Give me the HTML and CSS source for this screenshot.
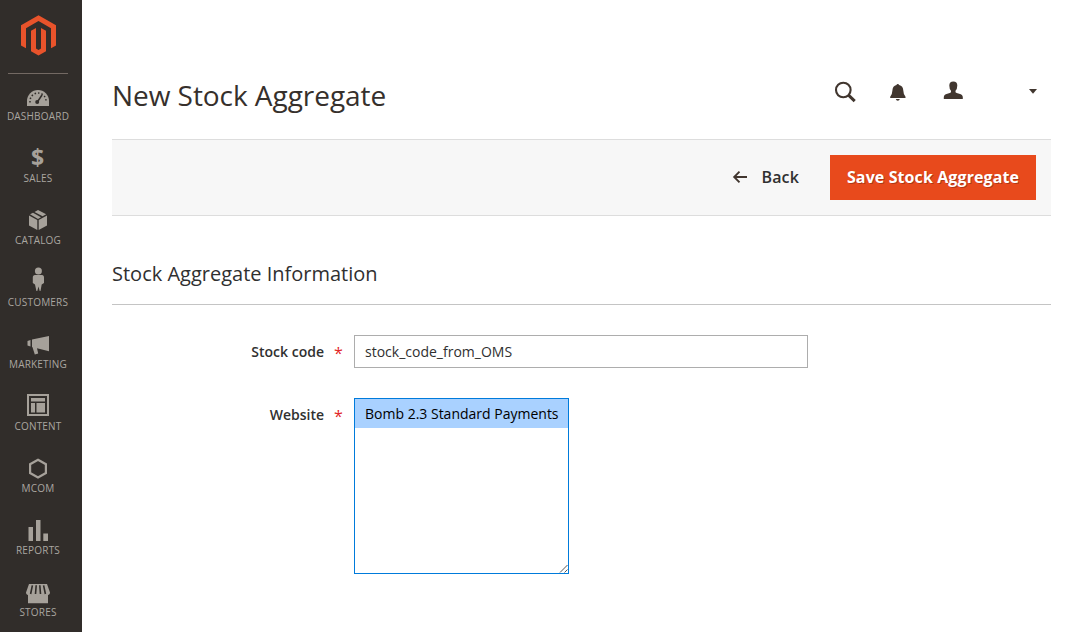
FILE: index.html
```html
<!DOCTYPE html>
<html lang="en">
<head>
<meta charset="utf-8">
<title>New Stock Aggregate</title>
<link rel="stylesheet" href="styles.css">
</head>
<body>
<div class="page">
  <aside class="sidebar">
    <div class="brand">
      <svg class="brand-logo" viewBox="0 0 76 60"><g fill="#e8532b"><path d="M38.5 15.300 56 25.300V45.500L51 48.300V28.300L38.500 21 26 28.300V48.300L21 45.500V25.300Z"/><path d="M31 30.800 36 28V48.400L38.500 50 41 48.400V28L46 30.800V51.200L38.500 55.500 31 51.200Z"/></g></svg>
    </div>
    <nav class="menu">
      <a class="item"><svg class="icon" viewBox="0 0 76 36"><path d="M27 32v-5a11 11 0 0 1 22 0v5z"/><g fill="none" stroke="#312d2a"><path stroke-width="1.500" stroke-dasharray="1.500 2" d="M30 28.500v-1.500a8 8 0 0 1 16 0v1.500"/><path stroke-width="1.500" d="M37 28.500 42 21"/></g><circle cx="37.200" cy="28" r="2" fill="#312d2a"/></svg><span class="label">DASHBOARD</span></a>
      <a class="item"><svg class="icon" viewBox="0 0 76 36"><text class="currency" x="37.500" y="30" text-anchor="middle">$</text></svg><span class="label">SALES</span></a>
      <a class="item"><svg class="icon" viewBox="0 0 76 36"><path d="M29 17.500 37.300 22V32L29 27.500ZM38.700 22 47 17.500V27.500L38.700 32ZM30 16.300 33 14.700 41 19.200 38 20.900ZM34.500 13.900 38 12 46.200 16.300 42.600 18.300Z"/></svg><span class="label">CATALOG</span></a>
      <a class="item"><svg class="icon" viewBox="0 0 76 36"><circle cx="38.400" cy="10.900" r="3.500"/><path d="M35 15h7c1.300 0 2 1 2 2.500v5.500l-2.300 1.500L40.500 31h-.8L38.500 26.500 37.300 31h-.9L35 24.500 32.800 23v-5.500C32.800 16 33.500 15 35 15Z"/></svg><span class="label">CUSTOMERS</span></a>
      <a class="item"><svg class="icon" viewBox="0 0 76 36"><path d="M27.500 19 30.500 18V24.500L27.500 23.500ZM32 17.500 49 14V29.200L37 26.200 38.200 31.500 34.800 32.500 32.500 25.300 32 25Z"/></svg><span class="label">MARKETING</span></a>
      <a class="item"><svg class="icon" viewBox="0 0 76 36"><path fill-rule="evenodd" d="M27 10H49V32H27ZM29 12V30H47V12ZM31 14H45V17.500H31ZM31 19H35V28.500H31ZM36.500 19H45V28.500H36.500Z"/></svg><span class="label">CONTENT</span></a>
      <a class="item"><svg class="icon" viewBox="0 0 76 36"><path class="outline" d="M38 13.800 45.900 18.200V27L38 31.400 30.100 27V18.200Z"/></svg><span class="label">MCOM</span></a>
      <a class="item"><svg class="icon" viewBox="0 0 76 36"><path d="M28.500 19H33V33H28.500ZM36 12H40.500V33H36ZM43.300 25.500H48V33H43.300Z"/></svg><span class="label">REPORTS</span></a>
      <a class="item"><svg class="icon" viewBox="0 0 76 36"><path d="M29 14H47L50 22.500C50 24 49 25 48 25V33.300H28V25C27 25 26 24 26 22.500Z"/><path fill="none" stroke="#312d2a" stroke-width="1.600" d="M32.400 15.300 30.600 24M36.200 15.300 35.500 24M39.800 15.300 40.500 24M43.600 15.300 45.400 24"/></svg><span class="label">STORES</span></a>
    </nav>
  </aside>
  <main class="content">
    <header class="header">
      <h1 class="title">New Stock Aggregate</h1>
      <svg class="tools" viewBox="0 0 221 30"><g fill="#41362f"><circle cx="13.300" cy="14" r="7.300" fill="none" stroke="#41362f" stroke-width="2.100"/><path d="M18.500 19.200 24.700 25.200" stroke="#41362f" stroke-width="3"/><path d="M67.800 8q1 0 1.300 1.100 4 .9 4.200 5.400.2 4.500 2.200 6.300v1.200H60.200v-1.200q2-1.800 2.200-6.300.2-4.500 4.100-5.400.1-1.100 1.300-1.100ZM65.800 23h4q-.4 1.800-2 1.800t-2-1.800Z"/><path d="M123.300 5.400q4 0 4 4.100 0 3.400-1.800 5.300v1.500q.5.600 3.700 1.400 3.600.9 3.600 3.500V23h-19v-1.800q0-2.600 3.500-3.500 3.200-.8 3.700-1.400v-1.500q-1.700-1.900-1.700-5.300 0-4.100 4-4.100Z"/><path d="M199 13h8l-4 4.700Z"/></g></svg>
    </header>
    <div class="actions">
      <button class="back"><svg class="arrow" viewBox="0 0 16 14"><path d="M15 7H2M7.500 1.700 2.200 7 7.500 12.300" fill="none" stroke="#41362f" stroke-width="1.900"/></svg>Back</button>
      <button class="save">Save Stock Aggregate</button>
    </div>
    <h2 class="section">Stock Aggregate Information</h2>
    <form class="form">
      <label class="name" for="code">Stock code<span class="required">*</span></label>
      <input class="input" id="code" value="stock_code_from_OMS">
      <label class="name" for="site">Website<span class="required">*</span></label>
      <div class="listbox" id="site"><div class="option">Bomb 2.3 Standard Payments</div><svg class="grip" viewBox="0 0 9 9"><path d="M1 8.500 8.500 1M5.500 8.500 8.500 5.500" fill="none" stroke="#555" stroke-width="1"/></svg></div>
    </form>
  </main>
</div>
</body>
</html>
```
FILE: styles.css
```css
* { box-sizing: border-box; }
body { margin: 0; font-family: "Open Sans", sans-serif; color: #303030; background: #fff; }
.page { display: flex; width: 1072px; height: 632px; overflow: hidden; }
.sidebar { width: 82px; flex: none; background: #312d2a; padding-right: 6px; }
.brand { height: 74px; margin: 0 8px; border-bottom: 1px solid #736963; }
.brand-logo { display: block; width: 76px; height: 60px; margin-left: -8px; }
.menu { display: flex; flex-direction: column; }
.item { height: 62px; display: flex; flex-direction: column; color: #aaa6a0; fill: #a6a19a; }
.icon { width: 76px; height: 36px; flex: none; }
.currency { font: 700 23px "Open Sans", sans-serif; }
.outline { fill: none; stroke: #a6a19a; stroke-width: 2.2; }
.label { font-size: 10px; line-height: 12px; letter-spacing: .2px; text-align: center; }
.content { flex: 1; padding: 0 21px 0 30px; }
.header { height: 139px; padding-top: 76px; display: flex; justify-content: space-between; }
.title { margin: 0; font-size: 28px; line-height: 38px; letter-spacing: -.05px; font-weight: 400; color: #36302c; white-space: nowrap; }
.tools { width: 221px; height: 30px; }
.actions { height: 77px; display: flex; justify-content: flex-end; align-items: center; gap: 31px; padding-right: 15px; background: #f7f7f7; border: solid #ddd; border-width: 1px 0; }
.back, .save { font: 600 16px/22px "Open Sans", sans-serif; border: 0; padding: 0 0 2px; }
.back { display: flex; align-items: center; gap: 13px; letter-spacing: .15px; background: none; color: #303030; }
.arrow { width: 16px; height: 14px; }
.save { width: 206px; height: 45px; font-weight: 700; letter-spacing: .1px; white-space: nowrap; background: #e84a1c; color: #fff; text-shadow: 1px 1px 0 rgba(0, 0, 0, .25); }
.section { margin: 0; height: 89px; padding-top: 44px; font-size: 20px; line-height: 27px; font-weight: 400; border-bottom: 1px solid #c4c4c4; color: #303030; }
.form { display: grid; grid-template-columns: 230px 454px; column-gap: 12px; row-gap: 30px; padding-top: 30px; }
.name { display: flex; justify-content: flex-end; gap: 10px; font-size: 14px; line-height: 33px; font-weight: 600; }
.required { color: #e22626; width: 8px; font-size: 16px; line-height: 37px; height: 33px; font-weight: 400; }
.input { height: 33px; border: 1px solid #adadad; padding: 0 10px; font: 14px "Open Sans", sans-serif; color: #303030; outline: 0; }
.listbox { position: relative; width: 215px; height: 176px; border: 1px solid #007bdb; }
.option { height: 29px; padding-left: 10px; font-size: 14px; line-height: 29px; color: #000; background: #a9d1ff; white-space: nowrap; }
.grip { position: absolute; right: 0; bottom: 0; width: 9px; height: 9px; }
```
